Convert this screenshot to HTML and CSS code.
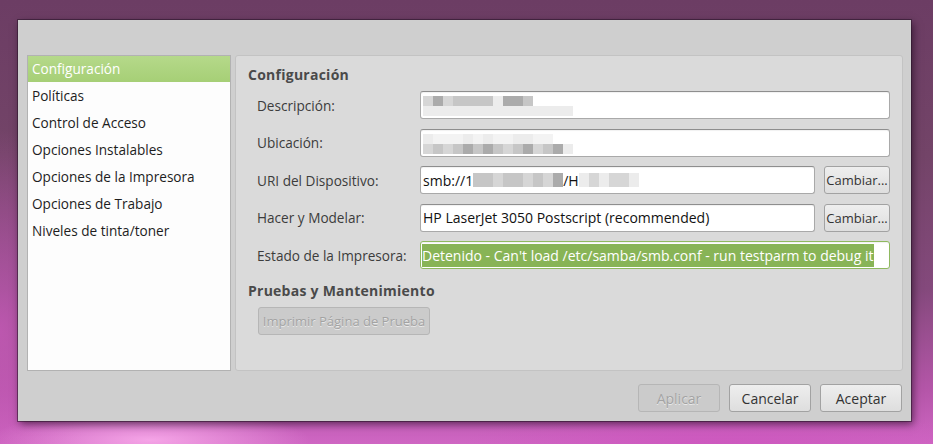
FILE: index.html
```html
<!DOCTYPE html>
<html lang="es">
<head>
<meta charset="utf-8">
<title>Propiedades de la impresora</title>
<link rel="stylesheet" href="styles.css">
</head>
<body>
<div class="dialog">
  <div class="content">
    <ul class="sidebar">
      <li class="item selected">Configuración</li>
      <li class="item">Políticas</li>
      <li class="item">Control de Acceso</li>
      <li class="item">Opciones Instalables</li>
      <li class="item">Opciones de la Impresora</li>
      <li class="item">Opciones de Trabajo</li>
      <li class="item">Niveles de tinta/toner</li>
    </ul>
    <div class="panel">
      <h2 class="heading">Configuración</h2>
      <div class="form">
        <label class="label">Descripción:</label>
        <div class="entry wide">
          <div class="blur">
            <div class="brow"><i class="c2"></i><i class="c4"></i><i class="c2"></i><i class="c3"></i><i class="c3"></i><i class="c3"></i><i class="c3"></i><i class="c1"></i><i class="c4"></i><i class="c4"></i><i class="c3"></i></div>
            <div class="brow"><i class="c1"></i><i class="c1"></i><i class="c1"></i><i class="c1"></i><i class="c1"></i><i class="c1"></i><i class="c1"></i><i class="c1"></i><i class="c1"></i><i class="c1"></i><i class="c1"></i><i class="c1"></i><i class="c1"></i><i class="c1"></i><i class="c1"></i></div>
          </div>
        </div>
        <label class="label">Ubicación:</label>
        <div class="entry wide">
          <div class="blur">
            <div class="brow"><i class="c1"></i><i class="c0"></i><i class="c0"></i><i class="c0"></i><i class="c1"></i><i class="c0"></i><i class="c1"></i><i class="c0"></i><i class="c0"></i><i class="c1"></i><i class="c1"></i><i class="c0"></i><i class="c0"></i></div>
            <div class="brow"><i class="c2"></i><i class="c3"></i><i class="c2"></i><i class="c3"></i><i class="c4"></i><i class="c3"></i><i class="c4"></i><i class="c3"></i><i class="c2"></i><i class="c3"></i><i class="c4"></i><i class="c2"></i><i class="c3"></i><i class="c4"></i><i class="c1"></i></div>
          </div>
        </div>
        <label class="label">URI del Dispositivo:</label>
        <div class="entry"><span class="text">smb://1</span><span class="blurline"><i class="c3"></i><i class="c3"></i><i class="c2"></i><i class="c3"></i><i class="c3"></i><i class="c2"></i><i class="c3"></i><i class="c2"></i><i class="c4"></i></span><span class="text">/H</span><span class="blurline"><i class="c1"></i><i class="c2"></i><i class="c1"></i><i class="c2"></i><i class="c2"></i><i class="c1"></i></span></div>
        <button class="btn small">Cambiar...</button>
        <label class="label">Hacer y Modelar:</label>
        <div class="entry"><span class="text">HP LaserJet 3050 Postscript (recommended)</span></div>
        <button class="btn small">Cambiar...</button>
        <label class="label">Estado de la Impresora:</label>
        <div class="entry wide focus"><span class="sel">Detenido - Can't load /etc/samba/smb.conf - run testparm to debug it</span></div>
      </div>
      <h2 class="heading second">Pruebas y Mantenimiento</h2>
      <button class="btn disabled test">Imprimir Página de Prueba</button>
    </div>
  </div>
  <div class="actions">
    <button class="btn disabled action">Aplicar</button>
    <button class="btn action">Cancelar</button>
    <button class="btn action">Aceptar</button>
  </div>
</div>
</body>
</html>
```
FILE: styles.css
```css
html, body {
  margin: 0;
  padding: 0;
}
body {
  width: 933px;
  height: 444px;
  overflow: hidden;
  font-family: "Open Sans", "DejaVu Sans", sans-serif;
  font-size: 13.6px;
  color: #2e3436;
  background:
    radial-gradient(ellipse 160px 30px at 150px 440px, rgba(255,180,240,0.8), rgba(255,180,240,0) 100%),
    radial-gradient(ellipse 260px 50px at 720px 450px, rgba(205,85,190,0.9), rgba(205,85,190,0) 100%),
    radial-gradient(ellipse 100px 200px at 0px 330px, rgba(200,90,185,0.75), rgba(200,90,185,0) 100%),
    linear-gradient(180deg, #6c3d64 0%, #734468 35%, #84497c 65%, #b556a9 88%, #cf66c3 100%);
  display: flex;
  padding-top: 20px;
  padding-left: 18px;
  box-sizing: border-box;
}
.dialog {
  width: 893px;
  height: 401px;
  background: #cfcfcf;
  box-shadow: 0 0 0 1px rgba(40,20,40,0.55), 2px 3px 8px rgba(20,0,20,0.6);
  box-sizing: border-box;
  padding: 35px 8px 9px 9px;
  display: flex;
  flex-direction: column;
}
.content {
  display: flex;
  gap: 4px;
  height: 316px;
}
.sidebar {
  list-style: none;
  margin: 0;
  padding: 0;
  width: 204px;
  box-sizing: border-box;
  background: #fdfdfd;
  border: 1px solid #b2b2b2;
}
.item {
  height: 27px;
  line-height: 27px;
  padding-left: 4px;
  color: #1e1e1e;
  white-space: nowrap;
}
.item.selected {
  height: 26px;
  line-height: 26px;
  background: linear-gradient(180deg, #b5d98a 0%, #a6cf76 100%);
  color: #ffffff;
}
.panel {
  width: 668px;
  box-sizing: border-box;
  background: #dadada;
  border: 1px solid #c3c3c3;
  border-radius: 3px;
  padding: 9px 12px 0 12px;
}
.heading {
  margin: 0;
  font-size: 14px;
  font-weight: bold;
  letter-spacing: 0.25px;
  color: #4a4a4a;
  line-height: 19px;
}
.heading.second {
  margin-top: 12px;
}
.form {
  display: grid;
  grid-template-columns: 154px 395px 66px;
  column-gap: 9px;
  row-gap: 9.5px;
  margin: 7px 0 0 9px;
  align-items: center;
}
.label {
  color: #3c3c3c;
  white-space: nowrap;
}
.entry {
  height: 28px;
  box-sizing: border-box;
  background: #ffffff;
  border: 1px solid #a9a9a9;
  border-top-color: #8e8e8e;
  border-radius: 3px;
  box-shadow: inset 0 1px 1px rgba(0,0,0,0.06);
  display: flex;
  align-items: center;
  padding-left: 2px;
  overflow: hidden;
  white-space: nowrap;
  color: #111111;
  font-size: 14px;
}
.entry.wide {
  grid-column: 2 / 4;
}
.entry.focus {
  border-color: #8fb95f;
  padding-left: 1px;
}
.sel {
  background: #88b456;
  color: #ffffff;
  line-height: 23px;
  padding-right: 1px;
}
.blur {
  display: flex;
  flex-direction: column;
  margin-top: 2px;
}
.brow {
  display: flex;
  height: 10px;
}
.brow i, .blurline i {
  display: block;
  width: 10px;
  height: 10px;
}
.blurline {
  display: flex;
  height: 14px;
}
.blurline i {
  height: 14px;
}
.c0 { background: #f3f3f3; }
.c1 { background: #ececec; }
.c2 { background: #d6d6d6; }
.c3 { background: #c6c6c6; }
.c4 { background: #ababab; }
.btn {
  font-family: "Open Sans", "DejaVu Sans", sans-serif;
  font-size: 13.6px;
  color: #333333;
  height: 28px;
  box-sizing: border-box;
  border: 1px solid #a2a2a2;
  border-radius: 3px;
  background: linear-gradient(180deg, #eeeeee 0%, #dedede 100%);
  padding: 0;
  white-space: nowrap;
  overflow: hidden;
}
.btn.small {
  font-size: 13px;
}
.btn.disabled {
  background: #cbcbcb;
  border-color: #b6b6b6;
  color: #a3a3a3;
  text-shadow: 0 1px 0 rgba(255,255,255,0.6);
}
.btn.test {
  margin: 7px 0 0 10px;
  width: 172px;
  font-size: 13px;
}
.actions {
  display: flex;
  justify-content: flex-end;
  gap: 9px;
  margin-top: 13px;
  padding-right: 1px;
}
.btn.action {
  width: 82px;
  font-size: 14px;
}
```
